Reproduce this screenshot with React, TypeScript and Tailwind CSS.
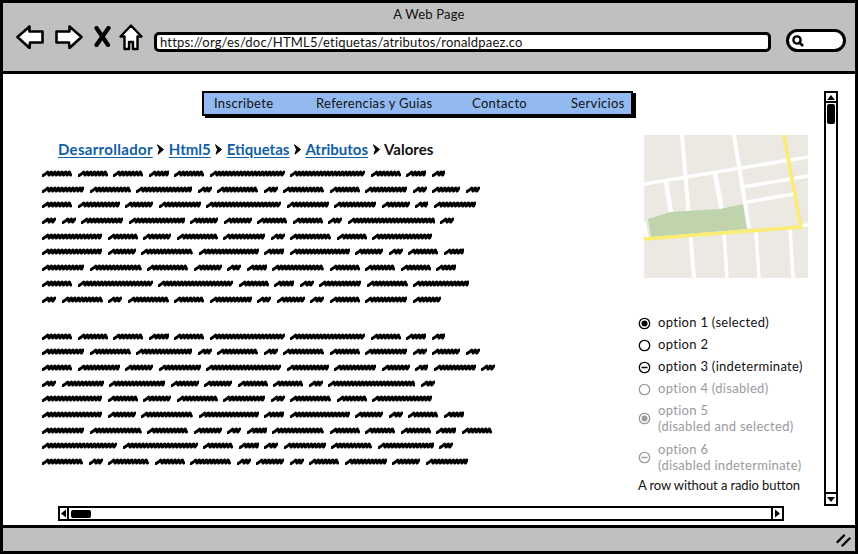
import React from "react";

const block1: number[][] = [
  [30,30,30,20,30,75,75,30,20,13],
  [42,41,56,14,41,14,41,30,42,14,28,14],
  [30,42,28,42,75,42,42,28,13,42],
  [14,14,42,56,28,28,30,30,14,87,14],
  [60,30,28,41,42,14,41,30,60],
  [60,28,52,60,20,60,28,14,30,20],
  [42,52,41,28,14,20,52,30,30,30,20],
  [30,75,75,30,20,14,42,41,56],
  [14,41,14,41,30,42,14,28,14,30,42,28],
];
const block2: number[][] = [
  [30,30,30,20,30,75,75,30,20,13],
  [42,41,56,14,41,14,41,30,42,14,28,14],
  [30,42,28,42,75,42,42,28,13,42,14],
  [14,42,56,28,28,30,30,14,87,14],
  [60,30,28,41,42,14,41,30,60],
  [60,28,52,60,20,60,28,14,30,20],
  [42,52,41,28,14,20,52,30,30,30,20,30],
  [75,75,30,20,14,42,41,56,14],
  [41,14,41,30,41,14,28,14,30,42,28,42],
];

function Word({ w }: { w: number }) {
  let d = "M1 5.6 L3.5 4";
  let x = 3.5;
  let up = true;
  while (x < w - 2) {
    const nx = Math.min(x + (up ? 2.2 : 1.4), w - 1);
    d += ` L${nx} ${up ? 2 : 5}`;
    up = !up;
    x = nx;
  }
  return (
    <svg width={w} height={7} viewBox={`0 0 ${w} 7`} className="shrink-0">
      <path d={d} fill="none" stroke="#000" strokeWidth={3} strokeLinejoin="round" strokeLinecap="round" />
    </svg>
  );
}

function Scribble({ lines }: { lines: number[][] }) {
  return (
    <div className="flex flex-col gap-[8.7px]">
      {lines.map((words, i) => (
        <div key={i} className="flex gap-[5.5px] h-[7px]">
          {words.map((w, j) => (
            <Word key={j} w={w} />
          ))}
        </div>
      ))}
    </div>
  );
}

function ArrowIcon({ flip }: { flip?: boolean }) {
  return (
    <svg width={28} height={24} viewBox="0 0 28 24" className={flip ? "-scale-x-100" : ""}>
      <path d="M1.5 12 L13.5 1.5 L13.5 6.5 L26.5 6.5 L26.5 17.5 L14 17.5 L13.5 23 Z" fill="#fff" stroke="#000" strokeWidth={2.6} strokeLinejoin="round" />
    </svg>
  );
}

function Radio({ kind, disabled }: { kind: "on" | "off" | "mid"; disabled?: boolean }) {
  const c = disabled ? "#9a9aa0" : "#000";
  return (
    <svg width={13} height={13} viewBox="0 0 13 13" className="shrink-0">
      <circle cx={6.5} cy={6.5} r={5.2} fill="#fff" stroke={c} strokeWidth={1.3} />
      {kind === "on" && <circle cx={6.5} cy={6.5} r={3} fill={c} />}
      {kind === "mid" && <path d="M3.5 6.5 H9.5" stroke={c} strokeWidth={1.5} />}
    </svg>
  );
}

function Crumb({ children }: { children: React.ReactNode }) {
  return <span className="text-[#0f5fa6] underline underline-offset-2">{children}</span>;
}

function Chevron() {
  return (
    <svg width={9} height={11} viewBox="0 0 9 11" className="mx-[3.5px] shrink-0">
      <path d="M1.5 0.8 L7.5 5.5 L2 10.2 L3.6 5.5 Z" fill="#000" stroke="#000" strokeWidth={1} strokeLinejoin="round" />
    </svg>
  );
}

function Triangle({ dir }: { dir: "up" | "down" | "left" | "right" }) {
  const pts = { up: "1,6 9,6 5,1", down: "1,1 9,1 5,6", left: "6,0.5 6,8.5 1,4.5", right: "1,0.5 1,8.5 6,4.5" }[dir];
  const horizontal = dir === "left" || dir === "right";
  return (
    <svg width={horizontal ? 7 : 10} height={horizontal ? 9 : 7} viewBox={horizontal ? "0 0 7 9" : "0 0 10 7"}>
      <polygon points={pts} fill="#000" />
    </svg>
  );
}

function MapPic() {
  return (
    <svg width={164} height={143} viewBox="0 0 164 143" className="block">
      <rect width={164} height={143} fill="#ebe9e2" />
      <g stroke="#fff" fill="none" strokeWidth={3.6}>
        <path d="M0 49 L164 22" />
        <path d="M38 0 L50 143" strokeWidth={4} />
        <path d="M90 0 L105 93" strokeWidth={4} />
        <path d="M22 47 L27 77" strokeWidth={4.5} />
        <path d="M71 38 L78 76" strokeWidth={4.5} />
        <path d="M99 52 L164 41" />
        <path d="M103 67 L150 59" />
        <path d="M80 98 L83 143" />
        <path d="M112 97 L115 143" />
        <path d="M146 93 L149 143" />
        <path d="M0 87 L3 103" />
        <path d="M156 91 L164 90" />
      </g>
      <polygon points="4,84 27,77 76,74 99,69 103,94 7,102" fill="#bfd3ac" />
      <path d="M0 104 L157 92 L140 0" fill="none" stroke="#fbec74" strokeWidth={3.6} />
    </svg>
  );
}

export default function App() {
  return (
    <div className="w-[858px] h-[555px] bg-white overflow-hidden text-[13px] text-[#111] font-['Lato','Liberation_Sans',sans-serif]">
      <div className="w-[858px] h-[554px] flex flex-col border-[3px] border-black">
        <div className="h-[71px] shrink-0 bg-[#c0c0c0] border-b-[3px] border-black flex flex-col">
          <div className="text-center leading-[16px] pt-[3px] h-[19px] tracking-[0.2px]">A Web Page</div>
          <div className="flex items-start h-[30px] mt-[3px] pl-[13px]">
            <ArrowIcon />
            <div className="w-[11px]" />
            <ArrowIcon flip />
            <svg width={17} height={21} viewBox="0 0 17 21" className="ml-[11px] mt-[1px]">
              <path d="M2.5 2 L14 19 M14.5 2 L2.5 19" stroke="#000" strokeWidth={4.2} strokeLinecap="round" />
            </svg>
            <svg width={24} height={27} viewBox="0 0 24 27" className="ml-[8px] -mt-[1px]">
              <path d="M12 1.5 L22.5 12.5 L18.5 12.5 L18.5 25 L14 25 L14 18 L10 18 L10 25 L5.5 25 L5.5 12.5 L1.5 12.5 Z" fill="#fff" stroke="#000" strokeWidth={2.4} strokeLinejoin="round" />
            </svg>
            <div className="ml-[11px] w-[617px] h-[20px] mt-[7px] bg-white border-[3px] border-black rounded-[5px] flex items-center pl-[3px] text-[13px] tracking-[0.18px] whitespace-nowrap leading-none">
              https://org/es/doc/HTML5/etiquetas/atributos/ronaldpaez.co
            </div>
            <div className="ml-[15px] w-[60px] h-[23px] mt-[4px] bg-white border-[3px] border-black rounded-full flex items-center pl-[2px]">
              <svg width={14} height={14} viewBox="0 0 14 14">
                <circle cx={6} cy={6} r={3.6} fill="none" stroke="#000" strokeWidth={2.4} />
                <path d="M8.5 8.5 L12 12" stroke="#000" strokeWidth={2.6} />
              </svg>
            </div>
          </div>
        </div>

        <div className="flex-1 min-h-0 flex flex-col">
          <div className="flex pt-[17px] pr-[17px]">
            <div className="flex-1 min-w-0 flex flex-col">
              <div className="ml-[199px] w-[431px] h-[25px] bg-[#92b9f0] border-2 border-black shadow-[3px_2px_0_#000] flex items-center whitespace-nowrap tracking-[0.33px]">
                <span className="ml-[10px] w-[102px]">Inscribete</span>
                <span className="w-[156px]">Referencias y Guias</span>
                <span className="w-[99px]">Contacto</span>
                <span>Servicios</span>
              </div>
              <div className="flex">
                <div className="w-[641px] shrink-0">
                  <div className="ml-[55px] mt-[24px] flex items-center h-[18px] text-[15px] font-bold whitespace-nowrap">
                    <span className="tracking-[0.3px] flex"><Crumb>Desarrollador</Crumb></span>
                    <Chevron />
                    <Crumb>Html5</Crumb>
                    <Chevron />
                    <Crumb>Etiquetas</Crumb>
                    <Chevron />
                    <Crumb>Atributos</Crumb>
                    <Chevron />
                    <span>Valores</span>
                  </div>
                  <div className="ml-[39px] mt-[12px]">
                    <Scribble lines={block1} />
                  </div>
                  <div className="ml-[39px] mt-[30px]">
                    <Scribble lines={block2} />
                  </div>
                </div>
                <div className="flex flex-col">
                  <div className="mt-[19px]">
                    <MapPic />
                  </div>
                  <div className="mt-[34px] -ml-[6px] flex flex-col whitespace-nowrap tracking-[0.3px]">
                    <div className="flex items-center h-[22px] gap-[7px]"><Radio kind="on" />option 1 (selected)</div>
                    <div className="flex items-center h-[22px] gap-[7px]"><Radio kind="off" />option 2</div>
                    <div className="flex items-center h-[22px] gap-[7px]"><Radio kind="mid" />option 3 (indeterminate)</div>
                    <div className="flex items-center h-[22px] gap-[7px] text-[#9a9aa0]"><Radio kind="off" disabled />option 4 (disabled)</div>
                    <div className="flex items-center h-[36px] gap-[7px] text-[#9a9aa0] leading-[16px]"><Radio kind="on" disabled /><span>option 5<br />(disabled and selected)</span></div>
                    <div className="flex items-center h-[38px] mt-[2px] gap-[7px] text-[#9a9aa0] leading-[16px]"><Radio kind="mid" disabled /><span>option 6<br />(disabled indeterminate)</span></div>
                    <div className="h-[19px] flex items-center tracking-[-0.1px]">A row without a radio button</div>
                  </div>
                </div>
              </div>
            </div>
            <div className="w-[14px] h-[415px] shrink-0 border-2 border-black flex flex-col items-center bg-white">
              <div className="h-[10px] w-full border-b-2 border-black flex items-center justify-center shrink-0"><Triangle dir="up" /></div>
              <div className="w-[8px] h-[20px] mt-[1px] bg-black rounded-[2px]" />
              <div className="flex-1" />
              <div className="h-[12px] w-full border-t-2 border-black flex items-center justify-center shrink-0"><Triangle dir="down" /></div>
            </div>
          </div>
          <div className="ml-[55px] w-[726px] h-[15px] border-2 border-black flex items-center bg-white shrink-0">
            <div className="w-[9px] h-full border-r-2 border-black flex items-center justify-center shrink-0"><Triangle dir="left" /></div>
            <div className="w-[20px] h-[8px] ml-[2px] bg-black rounded-[2px]" />
            <div className="flex-1" />
            <div className="w-[11px] h-full border-l-2 border-black flex items-center justify-center shrink-0"><Triangle dir="right" /></div>
          </div>
        </div>

        <div className="h-[26px] shrink-0 bg-[#c0c0c0] border-t-[3px] border-black flex items-center justify-end pr-[4px]">
          <svg width={15} height={14} viewBox="0 0 15 14">
            <path d="M1.5 9 L8 2.5 M6.5 12.5 L13.5 5.5" stroke="#000" strokeWidth={2.4} strokeLinecap="round" />
          </svg>
        </div>
      </div>
    </div>
  );
}
